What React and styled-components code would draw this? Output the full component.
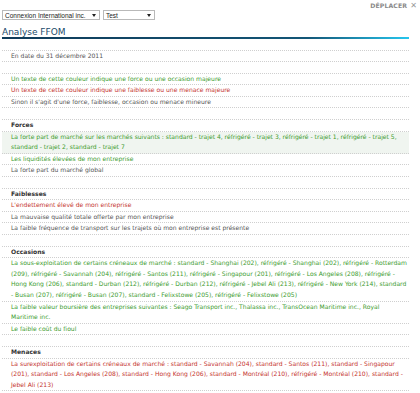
import React from "react";
import styled, { createGlobalStyle } from "styled-components";

const Global = createGlobalStyle`
  html, body { margin: 0; padding: 0; background: #fff; }
  body {
    font-family: "DejaVu Sans", Verdana, sans-serif;
  }
`;

const Page = styled.div`
  width: 407px;
  padding: 0 11px 0 2px;
`;

const MoveBar = styled.div`
  display: flex;
  justify-content: flex-end;
  align-items: center;
  gap: 3px;
  height: 10px;
  margin-right: -9px;
  padding-right: 1px;
  font-size: 6.2px;
  font-weight: bold;
  color: #8a8a8a;
  letter-spacing: 0.1px;
`;

const Close = styled.span`
  font-size: 8px;
  font-weight: normal;
  color: #9a9a9a;
`;

const Selects = styled.div`
  display: flex;
  gap: 3px;
`;

const Select = styled.div`
  box-sizing: border-box;
  display: flex;
  align-items: center;
  justify-content: space-between;
  width: ${(p) => p.$w}px;
  height: 10px;
  padding: 0 3px 0 2px;
  border: 1px solid #b9b9b9;
  background: #fff;
  font-family: "Liberation Sans", Arial, sans-serif;
  font-size: 6.5px;
  white-space: nowrap;
  color: #222;
`;

const Title = styled.h1`
  margin: 7px 0 0 0;
  font-family: "DejaVu Sans", Verdana, sans-serif;
  font-weight: normal;
  font-size: 9px;
  line-height: 10px;
  color: #1b4b6b;
`;

const Rule = styled.div`
  height: 1.5px;
  background: linear-gradient(to right, #0f3a58 0%, #135677 75%, #26c6ee 100%);
`;

const Table = styled.div`
  margin-top: 11px;
  border-top: 1px dotted #cfcfcf;
  font-size: 6.05px;
`;

const Row = styled.div`
  min-height: 10.6px;
  line-height: 10.6px;
  padding-left: 9px;
  padding-right: 1px;
  border-bottom: 1px dotted #cfcfcf;
  background: ${(p) => (p.$hl ? "#f0f5f0" : "transparent")};
  color: ${(p) =>
    p.$tone === "good" ? "#3d9c2f" : p.$tone === "bad" ? "#c5352f" : p.$tone === "head" ? "#333" : "#555"};
  font-weight: ${(p) => (p.$tone === "head" ? "bold" : "normal")};
`;

const Arrow = () => (
  <svg width="4" height="3" viewBox="0 0 4 3">
    <path d="M0 0 L4 0 L2 3 Z" fill="#222" />
  </svg>
);

const sections = [
  {
    title: "Forces",
    items: [
      {
        tone: "good",
        hl: true,
        text: "La forte part de marché sur les marchés suivants : standard - trajet 4, réfrigéré - trajet 3, réfrigéré - trajet 1, réfrigéré - trajet 5, standard - trajet 2, standard - trajet 7",
      },
      { tone: "good", text: "Les liquidités élevées de mon entreprise" },
      { tone: "neutral", text: "La forte part du marché global" },
    ],
  },
  {
    title: "Faiblesses",
    items: [
      { tone: "bad", text: "L'endettement élevé de mon entreprise" },
      { tone: "neutral", text: "La mauvaise qualité totale offerte par mon entreprise" },
      { tone: "neutral", text: "La faible fréquence de transport sur les trajets où mon entreprise est présente" },
    ],
  },
  {
    title: "Occasions",
    items: [
      {
        tone: "good",
        text: "La sous-exploitation de certains créneaux de marché : standard - Shanghai (202), réfrigéré - Shanghai (202), réfrigéré - Rotterdam (209), réfrigéré - Savannah (204), réfrigéré - Santos (211), réfrigéré - Singapour (201), réfrigéré - Los Angeles (208), réfrigéré - Hong Kong (206), standard - Durban (212), réfrigéré - Durban (212), réfrigéré - Jebel Ali (213), réfrigéré - New York (214), standard - Busan (207), réfrigéré - Busan (207), standard - Felixstowe (205), réfrigéré - Felixstowe (205)",
      },
      {
        tone: "good",
        text: "La faible valeur boursière des entreprises suivantes : Seago Transport inc., Thalassa inc., TransOcean Maritime inc., Royal Maritime inc.",
      },
      { tone: "good", text: "Le faible coût du fioul" },
    ],
  },
  {
    title: "Menaces",
    items: [
      {
        tone: "bad",
        text: "La surexploitation de certains créneaux de marché : standard - Savannah (204), standard - Santos (211), standard - Singapour (201), standard - Los Angeles (208), standard - Hong Kong (206), standard - Montréal (210), réfrigéré - Montréal (210), standard - Jebel Ali (213)",
      },
    ],
  },
];

export default function App() {
  return (
    <Page>
      <Global />
      <MoveBar>
        DÉPLACER <Close>✕</Close>
      </MoveBar>
      <Selects>
        <Select $w={98}>
          <span>Connexion International inc.</span>
          <Arrow />
        </Select>
        <Select $w={52}>
          <span>Test</span>
          <Arrow />
        </Select>
      </Selects>
      <Title>Analyse FFOM</Title>
      <Rule />
      <Table>
        <Row $tone="neutral">En date du 31 décembre 2011</Row>
        <Row />
        <Row $tone="good">Un texte de cette couleur indique une force ou une occasion majeure</Row>
        <Row $tone="bad">Un texte de cette couleur indique une faiblesse ou une menace majeure</Row>
        <Row $tone="neutral">Sinon il s'agit d'une force, faiblesse, occasion ou menace mineure</Row>
        <Row />
        {sections.map((s, i) => (
          <React.Fragment key={s.title}>
            {i > 0 && <Row />}
            <Row $tone="head">{s.title}</Row>
            {s.items.map((it, j) => (
              <Row key={j} $tone={it.tone} $hl={it.hl}>
                {it.text}
              </Row>
            ))}
          </React.Fragment>
        ))}
      </Table>
    </Page>
  );
}
